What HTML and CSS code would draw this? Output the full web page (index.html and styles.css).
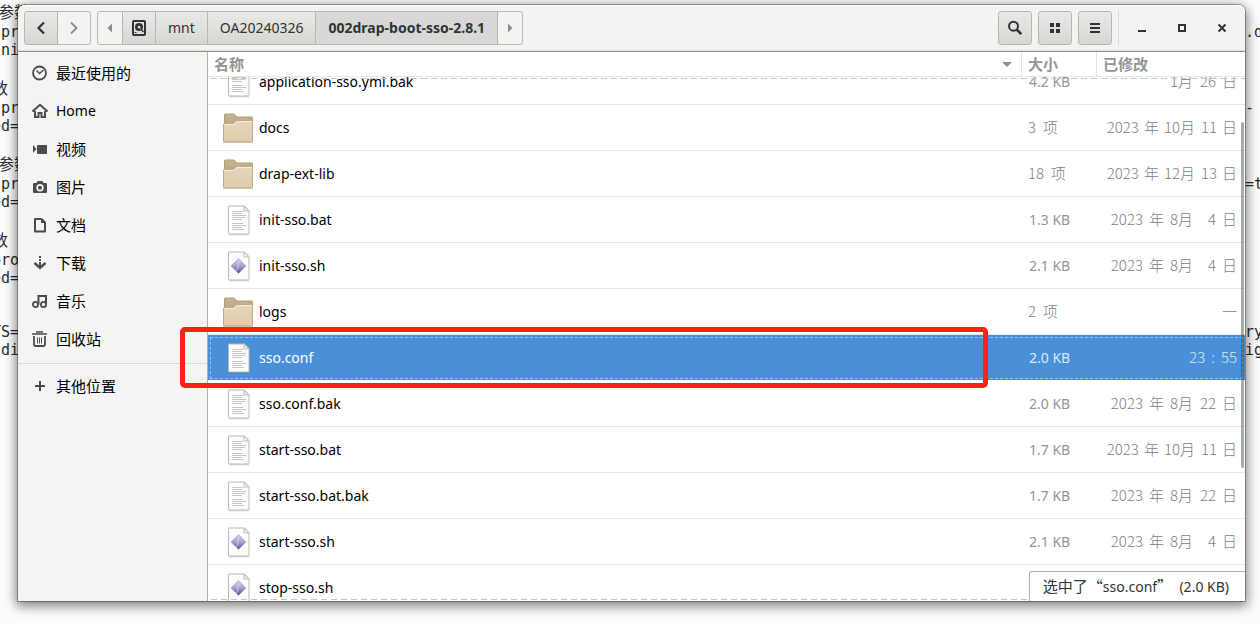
FILE: index.html
```html
<!DOCTYPE html>
<html lang="zh-CN">
<head>
<meta charset="utf-8">
<title>002drap-boot-sso-2.8.1</title>
<link rel="stylesheet" href="styles.css">
</head>
<body>
<svg class="defs" aria-hidden="true">
  <defs>
    <linearGradient id="gFolder" x1="0" y1="0" x2="0" y2="1"><stop offset="0" stop-color="#e6d6bd"/><stop offset="1" stop-color="#e0cbac"/></linearGradient>
    <linearGradient id="gBack" x1="0" y1="0" x2="0" y2="1"><stop offset="0" stop-color="#c9b793"/><stop offset="1" stop-color="#b7a57d"/></linearGradient>
    <linearGradient id="gDiamond" x1="0" y1="0" x2="0" y2="1"><stop offset="0" stop-color="#c9dcf2"/><stop offset=".5" stop-color="#a99fce"/><stop offset="1" stop-color="#6b4689"/></linearGradient>
    <symbol id="folder" viewBox="0 0 32 32">
      <path d="M1 30.5h30" stroke="#000" stroke-opacity=".2"/>
      <path d="M2.500 12V3q0-1 1-1H12l3 3h14.500q1 0 1 1v8z" fill="url(#gBack)" stroke="#b09d76"/>
      <path d="M1.500 29V12.500q0-1 1-1h8.500l3.500-3h15q1 0 1 1V29q0 .8-1 .8h-27q-1 0-1-.8z" fill="url(#gFolder)" stroke="#c0a983"/>
      <path d="M2.500 12.500H11.500l3.500-3h14.500" fill="none" stroke="#f6eee0"/>
    </symbol>
    <symbol id="page" viewBox="0 0 24 32">
      <path d="M2 3h15.500l4.500 4.500V31.500H2z" fill="#000" opacity=".12"/>
      <path d="M1.500 2.500q0-.5.500-.5H17.500l4.500 4.500V29.500q0 .5-.5.500H2q-.5 0-.5-.5z" fill="#fcfcfb" stroke="#b9bab5"/>
      <path d="M17 2.500V7h4.500z" fill="#fff" stroke="#b9bab5"/>
    </symbol>
    <symbol id="text" viewBox="0 0 24 32">
      <use href="#page" width="24" height="32"/>
      <path d="M5 7.500h11M5 9.500h10M5 11.500h14M5 13.500h13M5 15.500h10M5 19.500h11M5 21.500h14M5 23.500h10M5 25.500h12" stroke="#c7c8c5" fill="none"/>
    </symbol>
    <symbol id="script" viewBox="0 0 24 32">
      <use href="#page" width="24" height="32"/>
      <path d="M11.500 8.500l7.500 7.500-7.500 7.500L4 16z" fill="url(#gDiamond)" stroke="#a9a0cc" stroke-width=".7"/>
      <path d="M12.500 12q-2 1-1.500 4t-2 5" stroke="#e6e4f6" fill="none" opacity=".7"/>
    </symbol>
  </defs>
</svg>

<div class="terminal" aria-hidden="true">
  <pre class="term-left"><span class="cjk half">参数</span>
 pr
.ni

<span class="cjk">数</span>
 pr
ed=

<span class="cjk half">参数</span>
 pr
ed=

<span class="cjk">数</span>
pro
ed=


TS=
 di</pre>
  <pre class="term-right"><span class="cjk"> </span>
.d


<span class="cjk"> </span>
-


<span class="cjk"> </span>
=t


<span class="cjk"> </span>




ry
ig</pre>
</div>

<div class="window">
  <header class="headerbar">
    <div class="linked">
      <button class="btn nav" aria-label="后退"><svg width="16" height="16" viewBox="0 0 16 16"><path d="M11 2.500L5.500 8l5.500 5.500" fill="none" stroke="#2e3436" stroke-width="2.200"/></svg></button>
      <button class="btn nav flat" aria-label="前进"><svg width="16" height="16" viewBox="0 0 16 16"><path d="M5 2.500L10.500 8 5 13.500" fill="none" stroke="#8b8e8f" stroke-width="2"/></svg></button>
    </div>
    <nav class="linked path" aria-label="路径">
      <button class="btn edge flat" aria-label="向左"><svg width="16" height="16" viewBox="0 0 16 16"><path d="M10 3.500v9L5.500 8z" fill="#8b8e8f"/></svg></button>
      <button class="btn disk" aria-label="文件系统"><svg width="16" height="16" viewBox="0 0 16 16"><path fill-rule="evenodd" d="M3 0h10q2 0 2 2v12q0 2-2 2H3q-2 0-2-2V2q0-2 2-2zM3 2v12h10V2z" fill="#2e3436"/><circle cx="8" cy="7" r="4" fill="#2e3436"/><circle cx="8" cy="7" r="1.200" fill="#e8e8e6"/><path d="M8.500 7.500l3.500 4.500" stroke="#e8e8e6" stroke-width="1.200"/><path d="M9.500 8.500l3 3.500" stroke="#2e3436" stroke-width="1.500"/><path d="M3.500 12.500h2" stroke="#2e3436"/></svg></button>
      <button class="btn crumb">mnt</button>
      <button class="btn crumb">OA20240326</button>
      <button class="btn crumb current">002drap-boot-sso-2.8.1</button>
      <button class="btn edge flat" aria-label="向右"><svg width="16" height="16" viewBox="0 0 16 16"><path d="M6 3.500v9L10.500 8z" fill="#8b8e8f"/></svg></button>
    </nav>
    <div class="tools">
      <button class="btn square" aria-label="搜索"><svg width="16" height="16" viewBox="0 0 16 16"><circle cx="6.500" cy="6.200" r="4.500" fill="none" stroke="#2e3436" stroke-width="2"/><path d="M9.700 9.500l4.600 4.700" stroke="#2e3436" stroke-width="2.600"/></svg></button>
      <button class="btn square" aria-label="图标视图"><svg width="16" height="16" viewBox="0 0 16 16"><path d="M3 3h4v4H3zM9 3h4v4H9zM3 9h4v4H3zM9 9h4v4H9z" fill="#2e3436"/></svg></button>
      <button class="btn square" aria-label="菜单"><svg width="16" height="16" viewBox="0 0 16 16"><path d="M3 3h10v2H3zM3 7h10v2H3zM3 11h10v2H3z" fill="#2e3436"/></svg></button>
    </div>
    <div class="controls">
      <button aria-label="最小化"><svg width="16" height="16" viewBox="0 0 16 16"><path d="M4 10h8v2H4z" fill="#2e3436"/></svg></button>
      <button aria-label="最大化"><svg width="16" height="16" viewBox="0 0 16 16"><path d="M5 5h6v6H5z" fill="none" stroke="#2e3436" stroke-width="2"/></svg></button>
      <button aria-label="关闭"><svg width="16" height="16" viewBox="0 0 16 16"><path d="M4.500 4.500l7 7M11.500 4.500l-7 7" stroke="#2e3436" stroke-width="2"/></svg></button>
    </div>
  </header>

  <div class="content">
    <aside class="sidebar">
      <ul>
        <li><a href="#recent"><svg viewBox="0 0 16 16"><circle cx="7.500" cy="8" r="6.500" fill="none" stroke="#4a4c4a" stroke-width="1.800"/><path d="M4.500 5.500l3 3 4-3.500" fill="none" stroke="#4a4c4a" stroke-width="1.400"/></svg>最近使用的</a></li>
        <li><a href="#home"><svg viewBox="0 0 16 16"><path d="M.5 8.500L8 1.800l7.500 6.700" fill="none" stroke="#4a4c4a" stroke-width="2"/><path d="M3 8v6h3.500v-4h3v4H13V8" fill="none" stroke="#4a4c4a" stroke-width="2"/></svg>Home</a></li>
        <li><a href="#videos"><svg viewBox="0 0 16 16"><path d="M1 4l3.500 4L1 12zM5 5q0-1 1-1h8q1 0 1 1v7q0 1-1 1H6q-1 0-1-1z" fill="#4a4c4a"/></svg>视频</a></li>
        <li><a href="#pictures"><svg viewBox="0 0 16 16"><path fill-rule="evenodd" d="M5.500 2h5l1 2H14q1 0 1 1v8q0 1-1 1H2q-1 0-1-1V5q0-1 1-1h2.500zM8 5a3.700 3.700 0 100 7.400A3.700 3.700 0 008 5z" fill="#4a4c4a"/><circle cx="8" cy="8.700" r="2" fill="#4a4c4a"/></svg>图片</a></li>
        <li><a href="#documents"><svg viewBox="0 0 16 16"><path d="M3 2h6.500L13 5.500V14.500H3z" fill="none" stroke="#4a4c4a" stroke-width="2" stroke-linejoin="round"/><path d="M9 2v4h4z" fill="#4a4c4a"/></svg>文档</a></li>
        <li><a href="#downloads"><svg viewBox="0 0 16 16"><path d="M7 1h2v2H7zM7 4h2v2H7zM7 7h2v5H7z" fill="#4a4c4a"/><path d="M2.500 8L8 13l5.500-5" fill="none" stroke="#4a4c4a" stroke-width="2.400"/></svg>下载</a></li>
        <li><a href="#music"><svg viewBox="0 0 16 16"><path d="M6.500 11.500V3h7.500v8.500" fill="none" stroke="#4a4c4a" stroke-width="2"/><circle cx="3.500" cy="11.500" r="2.600" fill="none" stroke="#4a4c4a" stroke-width="1.800"/><circle cx="11.500" cy="11.500" r="2.600" fill="none" stroke="#4a4c4a" stroke-width="1.800"/></svg>音乐</a></li>
        <li><a href="#trash"><svg viewBox="0 0 16 16"><path d="M0 3h15M4 1h7" stroke="#4a4c4a" stroke-width="1.600"/><path d="M2 5v8.500q0 1.500 1.500 1.500h8q1.500 0 1.500-1.500V5" fill="none" stroke="#4a4c4a" stroke-width="1.800"/><path d="M5.500 6.500v6M7.500 6.500v6M9.500 6.500v6" stroke="#4a4c4a"/></svg>回收站</a></li>
      </ul>
      <hr>
      <ul>
        <li><a href="#other"><svg viewBox="0 0 16 16"><path d="M7 3h2v4h4v2H9v4H7V9H3V7h4z" fill="#4a4c4a"/></svg>其他位置</a></li>
      </ul>
    </aside>

    <main class="files">
      <table>
        <thead>
          <tr><th scope="col">名称<svg width="12" height="8" viewBox="0 0 12 8"><path d="M1 2h10L6 7z" fill="#8b8e8f"/></svg></th><th scope="col">大小</th><th scope="col">已修改</th></tr>
        </thead>
        <tbody>
          <tr><td><svg class="page"><use href="#text"/></svg>application-sso.yml.bak</td><td>4.2 KB</td><td><time><i>1月</i><i class="day">26</i><i>日</i></time></td></tr>
          <tr><td><svg class="dir"><use href="#folder"/></svg>docs</td><td class="count">3 &nbsp;项</td><td><time class="tight"><i>2023</i><i>年</i><i>10月</i><i class="day">11</i><i>日</i></time></td></tr>
          <tr><td><svg class="dir"><use href="#folder"/></svg>drap-ext-lib</td><td class="count">18 &nbsp;项</td><td><time class="tight"><i>2023</i><i>年</i><i>12月</i><i class="day">13</i><i>日</i></time></td></tr>
          <tr><td><svg class="page"><use href="#text"/></svg>init-sso.bat</td><td>1.3 KB</td><td><time><i>2023</i><i>年</i><i>8月</i><i class="day">4</i><i>日</i></time></td></tr>
          <tr><td><svg class="page"><use href="#script"/></svg>init-sso.sh</td><td>2.1 KB</td><td><time><i>2023</i><i>年</i><i>8月</i><i class="day">4</i><i>日</i></time></td></tr>
          <tr><td><svg class="dir"><use href="#folder"/></svg>logs</td><td class="count">2 &nbsp;项</td><td>一</td></tr>
          <tr class="selected" aria-selected="true"><td><svg class="page"><use href="#text"/></svg>sso.conf</td><td>2.0 KB</td><td><time><i>23</i><i>:</i><i>55</i></time></td></tr>
          <tr><td><svg class="page"><use href="#text"/></svg>sso.conf.bak</td><td>2.0 KB</td><td><time><i>2023</i><i>年</i><i>8月</i><i class="day">22</i><i>日</i></time></td></tr>
          <tr><td><svg class="page"><use href="#text"/></svg>start-sso.bat</td><td>1.7 KB</td><td><time class="tight"><i>2023</i><i>年</i><i>10月</i><i class="day">11</i><i>日</i></time></td></tr>
          <tr><td><svg class="page"><use href="#text"/></svg>start-sso.bat.bak</td><td>1.7 KB</td><td><time><i>2023</i><i>年</i><i>8月</i><i class="day">22</i><i>日</i></time></td></tr>
          <tr><td><svg class="page"><use href="#script"/></svg>start-sso.sh</td><td>2.1 KB</td><td><time><i>2023</i><i>年</i><i>8月</i><i class="day">4</i><i>日</i></time></td></tr>
          <tr><td><svg class="page"><use href="#script"/></svg>stop-sso.sh</td><td></td><td></td></tr>
        </tbody>
      </table>
      <div class="scrollbar"></div>
      <div class="status"><span class="zh">选中了“</span>sso.conf<span class="zh">”</span>&nbsp;&nbsp;(2.0 KB)</div>
    </main>
  </div>
  <div class="highlight"></div>
</div>
</body>
</html>
```

FILE: styles.css
```css
* { box-sizing: border-box; }

body {
  margin: 0;
  height: 100vh;
  padding: 5px 15px 23px 18px;
  position: relative;
  overflow: hidden;
  background: #fcfcfc;
  color: #000;
  font: 14px/20px "Noto Sans", "Noto Sans CJK SC", sans-serif;
}

button { font: inherit; color: #2e3436; padding: 0; }
ul { list-style: none; margin: 0; padding: 0; }
.defs { position: absolute; width: 0; height: 0; }

/* Terminal behind the file manager */
.terminal {
  position: absolute;
  inset: 0;
  display: flex;
  justify-content: space-between;
  padding-top: 1px;
  overflow: hidden;
  color: #2a2a2a;
}
.term-left, .term-right {
  margin: 0;
  font: 15px/18px "DejaVu Sans Mono", "Noto Sans CJK SC", monospace;
}
.term-left { margin-left: -8px; }
.term-right { width: 15px; }
.terminal .cjk {
  display: inline-block;
  height: 22px;
  line-height: 24px;
  vertical-align: top;
  font-size: 16px;
}
.terminal .half { padding-left: 6px; }

/* Window */
.window {
  position: relative;
  height: 100%;
  display: flex;
  flex-direction: column;
  border-radius: 7px 7px 0 0;
  background: #f4f4f2;
  box-shadow: 0 3px 12px 2px rgba(0, 0, 0, .5), 0 0 0 1px rgba(0, 0, 0, .3);
}

.headerbar {
  display: flex;
  align-items: center;
  gap: 6px;
  height: 47px;
  flex: none;
  padding: 0 3px 1px 6px;
  border-bottom: 1px solid #8f908c;
  border-radius: 7px 7px 0 0;
  background: #f3f3f2;
  box-shadow: inset 0 1px #fff, inset 0 -1px #dededc;
}
.linked { display: flex; }
.btn {
  display: flex;
  align-items: center;
  justify-content: center;
  height: 34px;
  border: 1px solid #b6b6b3;
  border-radius: 3px;
  background: linear-gradient(#e9e9e7, #d6d6d3);
}
.linked .btn { border-radius: 0; margin-left: -1px; }
.linked .btn:first-child { border-radius: 3px 0 0 3px; margin-left: 0; }
.linked .btn:last-child { border-radius: 0 3px 3px 0; }
.linked .flat { background: #f3f3f2; }
.linked .current { background: #d8d8d6; font-weight: 700; }
.nav { width: 34px; }
.edge { width: 26px; }
.disk { width: 34px; }
.crumb { padding: 0 12px; }
.tools { display: flex; gap: 6px; margin-left: auto; }
.square { width: 34px; }
.controls {
  display: flex;
  height: 34px;
  border-left: 1px solid #dadad8;
  padding-left: 3px;
}
.controls button {
  width: 40px;
  border: 0;
  background: none;
  display: flex;
  align-items: center;
  justify-content: center;
}

.content { flex: 1; min-height: 0; display: flex; }

/* Places */
.sidebar {
  width: 190px;
  flex: none;
  padding-top: 2px;
  border-right: 1px solid #b0b1ad;
  background: #f4f4f2;
}
.sidebar a {
  display: flex;
  align-items: center;
  gap: 8px;
  height: 38px;
  padding-left: 14px;
  color: #000;
  text-decoration: none;
  font-size: 15px;
}
.sidebar a[href="#home"] { font-size: 14px; }
.sidebar svg { width: 16px; height: 16px; }
.sidebar hr { margin: 5px 0 3px; border: 0; border-top: 1px solid #d8d8d6; }

/* File list */
.files {
  position: relative;
  flex: 1;
  min-width: 0;
  background: #fff;
}
table { display: flex; flex-direction: column; height: 100%; }
tr { display: grid; grid-template-columns: 1fr 75px 149px; }
thead tr { height: 25px; border-bottom: 1px solid #e8e8e7; }
th {
  display: flex;
  align-items: center;
  justify-content: space-between;
  padding: 0 8px 0 6px;
  color: #929595;
  font-size: 15px;
  text-align: left;
}
th + th { border-left: 1px solid #e3e3e2; }
tbody {
  position: relative;
  display: block;
  flex: 1;
  min-height: 0;
  overflow: hidden;
}
tbody::before, tbody::after {
  content: "";
  position: absolute;
  left: 3px;
  right: 0;
  height: 1px;
  background: repeating-linear-gradient(90deg, #c4c5c4 0 6px, transparent 6px 10px);
}
tbody::before { top: 1px; }
tbody::after { bottom: 1px; }
tbody tr { height: 46px; border-bottom: 1px solid #e6e6e5; }
tbody tr:first-child { margin-top: -18px; }
td {
  display: flex;
  align-items: center;
  padding: 0 8px;
  color: #929595;
}
td:first-child { gap: 5px; padding: 0 14px; color: #000; }
td.count { padding-left: 7px; }
td.count, td:last-child, time {
  font-family: "Noto Sans CJK SC", sans-serif;
  font-weight: 300;
  font-size: 15px;
  color: #7c7f80;
}
td.count, td:last-child { padding-bottom: 2px; }
td:last-child { justify-content: flex-end; }
time { display: flex; gap: 6px; }
time.tight { gap: 5px; }
time i { font-style: normal; }
.day { min-width: 17px; text-align: right; }
td svg { flex: none; height: 32px; }
td .dir { width: 32px; }
td .page { width: 24px; margin: 0 3px 0 5px; }
tbody .selected {
  background: #4a90d9;
  border-bottom-color: #fff;
  outline: 1px dashed rgba(255, 255, 255, .45);
  outline-offset: -3px;
}
.selected td, .selected td:first-child { color: #fff; }
.selected td:nth-child(2), .selected td:last-child, .selected time { color: #dbe9f7; }

.scrollbar {
  position: absolute;
  top: 70px;
  right: 1px;
  width: 3px;
  height: 346px;
  border-radius: 2px;
  background: rgba(46, 60, 54, .42);
}
.status {
  position: absolute;
  right: 0;
  bottom: 0;
  height: 30px;
  padding: 4px 16px 4px 13px;
  border: solid #b0b1ad;
  border-width: 1px 0 0 1px;
  border-radius: 3px 0 0 0;
  background: #fff;
  color: #2e3436;
  white-space: nowrap;
}
.status .zh { font-family: "Noto Sans CJK SC", sans-serif; font-size: 15px; }

/* Marker around the selected file */
.highlight {
  position: absolute;
  left: 162px;
  right: 257px;
  top: 322px;
  height: 61px;
  border: 5px solid #fd2015;
  border-radius: 5px;
  pointer-events: none;
}
```
